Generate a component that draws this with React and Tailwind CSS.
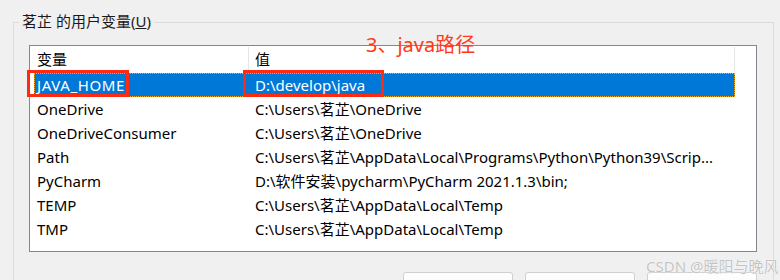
import React from 'react';

const ROWS = [
    { name: 'JAVA_HOME', value: 'D:\\develop\\java', selected: true },
    { name: 'OneDrive', value: 'C:\\Users\\茗芷\\OneDrive' },
    { name: 'OneDriveConsumer', value: 'C:\\Users\\茗芷\\OneDrive' },
    { name: 'Path', value: 'C:\\Users\\茗芷\\AppData\\Local\\Programs\\Python\\Python39\\Scrip...' },
    { name: 'PyCharm', value: 'D:\\软件安装\\pycharm\\PyCharm 2021.1.3\\bin;' },
    { name: 'TEMP', value: 'C:\\Users\\茗芷\\AppData\\Local\\Temp' },
    { name: 'TMP', value: 'C:\\Users\\茗芷\\AppData\\Local\\Temp' },
];

const FONT = "font-['Noto_Sans','Noto_Sans_CJK_SC',sans-serif]";

export default function App() {
    return (
        <div className={`relative w-[780px] h-[280px] overflow-hidden bg-[#f0f0f0] text-[15px] text-black ${FONT}`}>
            {/* 分组框 */}
            <div className="relative ml-[13px] mt-[22px] w-[761px] h-[300px] border border-[#dcdcdc] pl-[15px] pt-[22px]">
                <span className="absolute -top-[12px] left-[5px] bg-[#f0f0f0] px-[3px] leading-[20px] text-[#1a1a1a]">
                    茗芷 的用户变量(<span className="underline">U</span>)
                </span>

                {/* 列表 */}
                <div className="w-[728px] h-[207px] border border-[#828790] bg-white pl-[4px]">
                    <div className="flex h-[27px] items-center leading-none">
                        <div className="w-[214px] pl-[3px]">变量</div>
                        <div className="h-[24px] w-px self-start mt-[1px] bg-[#e5e5e5]" />
                        <div className="w-[485px] pl-[6px]">值</div>
                        <div className="h-[24px] w-px self-start mt-[1px] bg-[#e5e5e5]" />
                    </div>
                    {ROWS.map((r) => (
                        <div
                            key={r.name}
                            className={`flex h-[24px] w-[701px] items-center whitespace-nowrap leading-none ${r.selected ? 'bg-[#0078d7] text-white border border-dotted border-[#f5a623]' : 'border border-transparent'}`}
                        >
                            <div className={`w-[214px] pl-[2px] ${r.selected ? 'tracking-[0.6px]' : ''}`}>{r.name}</div>
                            <div className="pl-[6px]">{r.value}</div>
                        </div>
                    ))}
                </div>

                {/* 按钮 */}
                <div className="mt-[20px] flex justify-end gap-[12px] pr-[16px]">
                    <div className="h-[26px] w-[110px] rounded-[3px] border border-[#d0d0d0] bg-[#fdfdfd]" />
                    <div className="h-[26px] w-[110px] rounded-[3px] border border-[#d0d0d0] bg-[#fdfdfd]" />
                    <div className="h-[26px] w-[110px] rounded-[3px] border border-[#d0d0d0] bg-[#fdfdfd]" />
                </div>
            </div>

            {/* 标注 */}
            <div className="absolute left-[27px] top-[70px] h-[27px] w-[102px] border-[3px] border-[#ff2a12]" />
            <div className="absolute left-[243px] top-[70px] h-[27px] w-[141px] border-[3px] border-[#ff2a12]" />
            <div className="absolute left-[366px] top-[33px] text-[20px] leading-[24px] text-[#ff3a1a]">3、java路径</div>

            <div className="absolute left-[646px] top-[256px] text-[15px] leading-[20px] text-[#c4c4c4] [text-shadow:0_0_1px_#fff,0_0_1px_#fff]">
                CSDN @暖阳与晚风
            </div>
        </div>
    );
}
